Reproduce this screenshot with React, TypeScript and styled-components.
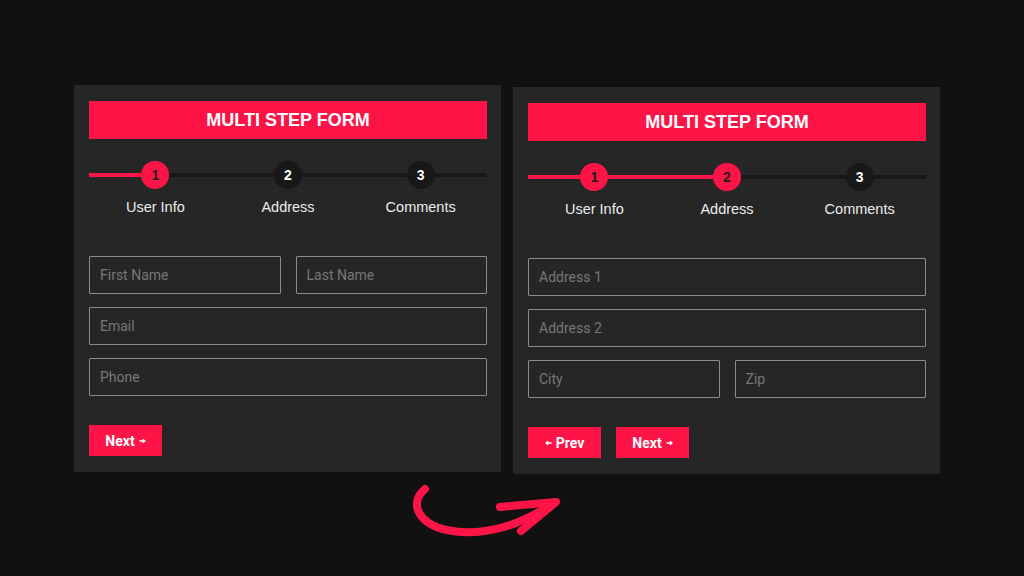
import React from 'react'
import styled, { createGlobalStyle } from 'styled-components'

const GlobalStyle = createGlobalStyle`
  html, body {
    margin: 0;
    padding: 0;
    background: #111111;
  }
  * {
    box-sizing: border-box;
  }
`

const PINK = '#ff1447'

const Page = styled.div`
  width: 1024px;
  height: 576px;
  padding: 85px 0 0 74px;
  background: #111111;
  overflow: hidden;
`

const Cards = styled.div`
  display: flex;
  align-items: flex-start;
  gap: 12px;
`

const Card = styled.div<{ $drop?: number }>`
  width: 427px;
  margin-top: ${({ $drop }) => $drop || 0}px;
  padding: 16px 14px 16px 15px;
  background: #262626;
  display: flex;
  flex-direction: column;
`

const Title = styled.h1`
  margin: 0;
  height: 38px;
  background: ${PINK};
  color: #fff;
  font-family: 'Liberation Sans', Arial, sans-serif;
  font-weight: 700;
  font-size: 18px;
  display: flex;
  align-items: center;
  justify-content: center;
`

const Stepper = styled.div`
  position: relative;
  margin-top: 22px;
  display: grid;
  grid-template-columns: repeat(3, 1fr);
`

const Track = styled.div`
  position: absolute;
  left: 0;
  right: 0;
  top: 12px;
  height: 4px;
  background: #181818;
`

const Fill = styled.div`
  height: 100%;
  background: ${PINK};
`

const Step = styled.div`
  position: relative;
  display: flex;
  flex-direction: column;
  align-items: center;
  gap: 8px;
`

const Dot = styled.div<{ $done: boolean }>`
  width: 28px;
  height: 28px;
  border-radius: 50%;
  background: ${({ $done }) => ($done ? PINK : '#181818')};
  color: ${({ $done }) => ($done ? '#1c1c1c' : '#ffffff')};
  font-family: 'Liberation Sans', Arial, sans-serif;
  font-weight: 700;
  font-size: 14px;
  display: flex;
  align-items: center;
  justify-content: center;
`

const StepLabel = styled.div`
  font-family: 'Liberation Sans', Arial, sans-serif;
  font-size: 14.5px;
  line-height: 20px;
  color: #ececec;
`

const Fields = styled.div`
  margin-top: 39px;
  display: flex;
  flex-direction: column;
  gap: 13px;
`

const Row = styled.div`
  display: flex;
  gap: 15px;
`

const Input = styled.input`
  flex: 1;
  min-width: 0;
  height: 38px;
  padding: 0 10px;
  background: transparent;
  border: 1.5px solid #8c8c8c;
  border-radius: 1px;
  outline: none;
  color: #ddd;
  font-family: Roboto, 'Noto Sans', sans-serif;
  font-size: 14px;
  &::placeholder {
    color: #777777;
  }
`

const Actions = styled.div`
  margin-top: 29px;
  display: flex;
  gap: 15px;
`

const Button = styled.button`
  width: 73px;
  height: 31px;
  border: none;
  padding: 0;
  background: ${PINK};
  color: #fff;
  font-family: Roboto, 'Noto Sans', sans-serif;
  font-weight: 700;
  font-size: 14px;
  display: flex;
  align-items: center;
  justify-content: center;
  gap: 4px;
  cursor: pointer;
`

const TinyArrow = ({ left }: { left?: boolean }) => (
  <svg width="7" height="6" viewBox="0 0 7 6" style={left ? { transform: 'scaleX(-1)' } : undefined}>
    <path d="M0.5 3 H5.5 M3.8 1.2 L6 3 L3.8 4.8" stroke="#fff" strokeWidth="1.3" fill="none" />
  </svg>
)

const ArrowRow = styled.div`
  margin-top: 6px;
  padding-left: 331px;
`

const steps = ['User Info', 'Address', 'Comments']

function Progress({ current }: { current: number }) {
  const pct = ((current - 1) * 2 + 1) / 6 * 100
  return (
    <Stepper>
      <Track>
        <Fill style={{ width: `${pct}%` }} />
      </Track>
      {steps.map((s, i) => (
        <Step key={s}>
          <Dot $done={i + 1 <= current}>{i + 1}</Dot>
          <StepLabel>{s}</StepLabel>
        </Step>
      ))}
    </Stepper>
  )
}

export default function App() {
  return (
    <Page>
      <GlobalStyle />
      <Cards>
        <Card>
          <Title>MULTI STEP FORM</Title>
          <Progress current={1} />
          <Fields>
            <Row>
              <Input placeholder="First Name" />
              <Input placeholder="Last Name" />
            </Row>
            <Row>
              <Input placeholder="Email" />
            </Row>
            <Row>
              <Input placeholder="Phone" />
            </Row>
          </Fields>
          <Actions>
            <Button>
              Next <TinyArrow />
            </Button>
          </Actions>
        </Card>

        <Card $drop={2}>
          <Title>MULTI STEP FORM</Title>
          <Progress current={2} />
          <Fields>
            <Row>
              <Input placeholder="Address 1" />
            </Row>
            <Row>
              <Input placeholder="Address 2" />
            </Row>
            <Row>
              <Input placeholder="City" />
              <Input placeholder="Zip" />
            </Row>
          </Fields>
          <Actions>
            <Button>
              <TinyArrow left /> Prev
            </Button>
            <Button>
              Next <TinyArrow />
            </Button>
          </Actions>
        </Card>
      </Cards>

      <ArrowRow>
        <svg width="160" height="65" viewBox="0 0 160 65">
          <path
            d="M20 9 C 2 24, 14 50, 58 52 C 92 54, 122 40, 148 24"
            stroke={PINK}
            strokeWidth="8"
            strokeLinecap="round"
            fill="none"
          />
          <path
            d="M95 27 L151 22 L116 51"
            stroke={PINK}
            strokeWidth="8"
            strokeLinecap="round"
            strokeLinejoin="round"
            fill="none"
          />
        </svg>
      </ArrowRow>
    </Page>
  )
}
